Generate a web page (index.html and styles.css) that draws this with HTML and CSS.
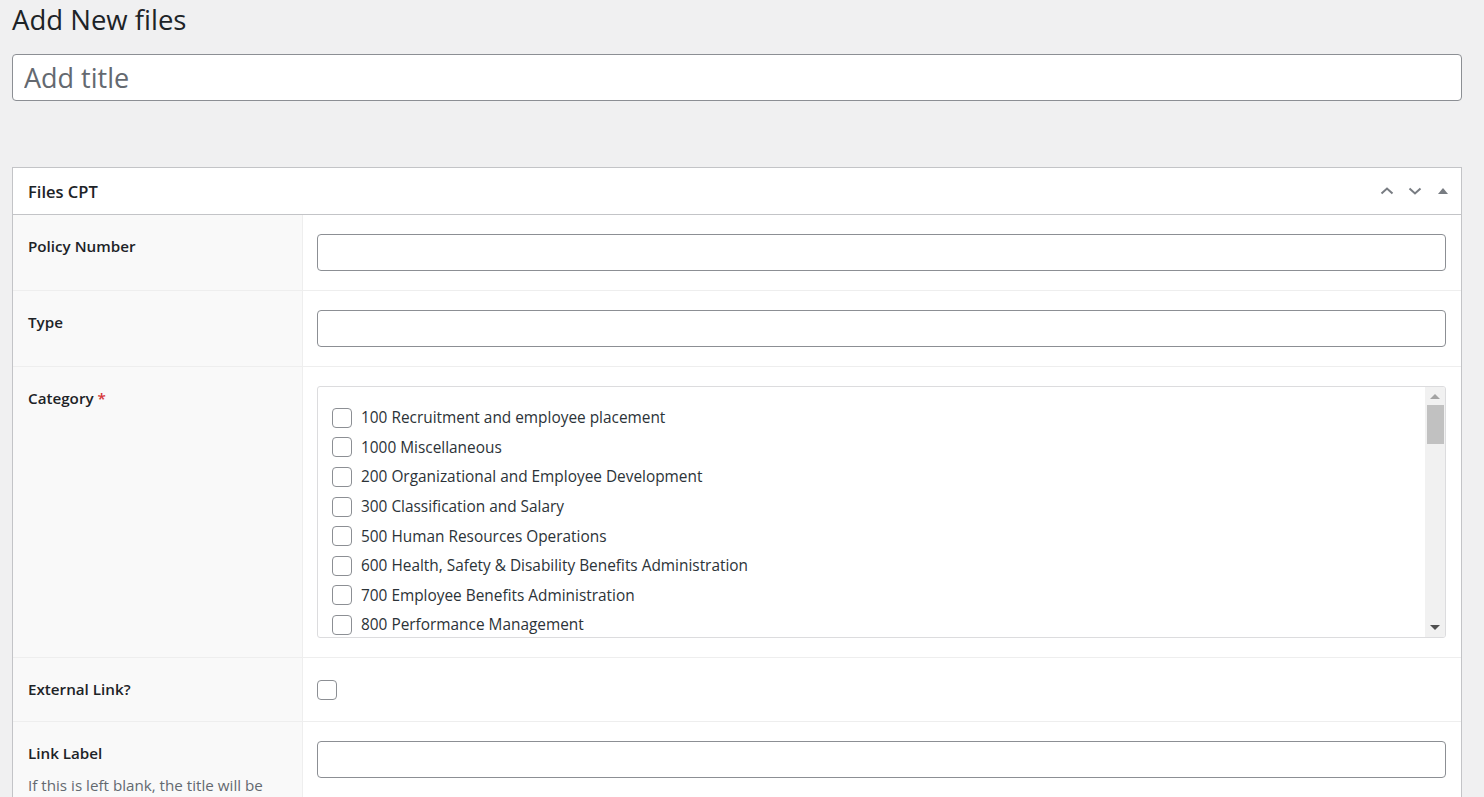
FILE: index.html
```html
<html>
<head>
	<meta charset="UTF-8">
	<title>Add New files</title>
	<link rel="stylesheet" href="styles.css">
</head>
<body>
	<div class="wrap">
		<h1 class="page-title">Add New files</h1>
		<div class="title-wrap">
			<input class="title-input" type="text" placeholder="Add title">
		</div>

		<div class="postbox">
			<div class="postbox-header">
				<h2>Files CPT</h2>
				<div class="handle-actions">
					<button class="handle-btn" type="button">
						<svg width="16" height="16" viewBox="0 0 16 16"><path d="M2.5 10.5 L8 5.5 L13.5 10.5" fill="none" stroke="#787c82" stroke-width="2"/></svg>
					</button>
					<button class="handle-btn" type="button">
						<svg width="16" height="16" viewBox="0 0 16 16"><path d="M2.5 5.5 L8 10.5 L13.5 5.5" fill="none" stroke="#787c82" stroke-width="2"/></svg>
					</button>
					<button class="handle-btn" type="button">
						<svg width="16" height="16" viewBox="0 0 16 16"><path d="M3 11 L8 5 L13 11 Z" fill="#787c82"/></svg>
					</button>
				</div>
			</div>

			<div class="fields">
				<div class="field">
					<div class="field-label"><label>Policy Number</label></div>
					<div class="field-input"><input class="text-input" type="text"></div>
				</div>
				<div class="field">
					<div class="field-label"><label>Type</label></div>
					<div class="field-input"><input class="text-input" type="text"></div>
				</div>
				<div class="field">
					<div class="field-label"><label>Category <span class="required">*</span></label></div>
					<div class="field-input">
						<div class="checklist-box">
							<ul class="checklist">
								<li><input type="checkbox" class="cb"><span>100 Recruitment and employee placement</span></li>
								<li><input type="checkbox" class="cb"><span>1000 Miscellaneous</span></li>
								<li><input type="checkbox" class="cb"><span>200 Organizational and Employee Development</span></li>
								<li><input type="checkbox" class="cb"><span>300 Classification and Salary</span></li>
								<li><input type="checkbox" class="cb"><span>500 Human Resources Operations</span></li>
								<li><input type="checkbox" class="cb"><span>600 Health, Safety &amp; Disability Benefits Administration</span></li>
								<li><input type="checkbox" class="cb"><span>700 Employee Benefits Administration</span></li>
								<li><input type="checkbox" class="cb"><span>800 Performance Management</span></li>
							</ul>
							<div class="scrollbar">
								<div class="sb-arrow sb-up"></div>
								<div class="sb-thumb"></div>
								<div class="sb-track"></div>
								<div class="sb-arrow sb-down"></div>
							</div>
						</div>
					</div>
				</div>
				<div class="field">
					<div class="field-label"><label>External Link?</label></div>
					<div class="field-input"><input type="checkbox" class="cb cb-single"></div>
				</div>
				<div class="field">
					<div class="field-label">
						<label>Link Label</label>
						<p class="description">If this is left blank, the title will be used.</p>
					</div>
					<div class="field-input"><input class="text-input" type="text"></div>
				</div>
			</div>
		</div>
	</div>
</body>
</html>
```

FILE: styles.css
```css
* {
	margin: 0;
	padding: 0;
	box-sizing: border-box;
}
body {
	background: #f0f0f1;
	color: #1d2327;
	font-family: "Open Sans", "Noto Sans", sans-serif;
	font-size: 15px;
}
.wrap {
	padding: 0 22px 0 12px;
}
.page-title {
	font-size: 27.5px;
	font-weight: 400;
	line-height: 35px;
	padding-top: 2px;
	color: #1d2327;
}
.title-wrap {
	margin-top: 17px;
}
.title-input {
	display: block;
	width: 100%;
	height: 47px;
	border: 1px solid #8c8f94;
	border-radius: 4px;
	padding: 0 11px;
	font-family: inherit;
	font-size: 27px;
	color: #1d2327;
	background: #fff;
	outline: none;
}
.title-input::placeholder {
	color: #646970;
}

/* meta box */
.postbox {
	margin-top: 66px;
	background: #fff;
	border: 1px solid #c3c4c7;
}
.postbox-header {
	display: flex;
	align-items: center;
	justify-content: space-between;
	height: 47px;
	border-bottom: 1px solid #c3c4c7;
	padding: 0 10px 0 15px;
}
.postbox-header h2 {
	font-size: 16.5px;
	font-weight: 600;
	color: #1d2327;
}
.handle-actions {
	display: flex;
	gap: 12px;
}
.handle-btn {
	display: flex;
	width: 16px;
	height: 16px;
	border: 0;
	background: none;
}

.field {
	display: flex;
	border-top: 1px solid #eeeeee;
}
.field:first-child {
	border-top: 0;
}
.field-label {
	width: 290px;
	flex-shrink: 0;
	background: #f9f9f9;
	border-right: 1px solid #eeeeee;
	padding: 21px 15px 15px 15px;
}
.field-label label {
	display: block;
	font-size: 15.2px;
	font-weight: 600;
	line-height: 20px;
	color: #1d2327;
}
.required {
	color: #d63638;
}
.description {
	margin-top: 12px;
	font-size: 15.2px;
	line-height: 20px;
	color: #646970;
}
.field-input {
	flex: 1;
	padding: 19px 15px 19px 14px;
}
.text-input {
	display: block;
	width: 100%;
	height: 37px;
	border: 1px solid #8c8f94;
	border-radius: 4px;
	background: #fff;
	font-family: inherit;
	font-size: 15px;
	padding: 0 8px;
	outline: none;
}

.cb {
	appearance: none;
	-webkit-appearance: none;
	display: block;
	flex-shrink: 0;
	width: 20px;
	height: 20px;
	border: 1px solid #8c8f94;
	border-radius: 4px;
	background: #fff;
	margin: 0;
}
.cb-single {
	margin: 3px 0 2px;
}

/* category list */
.checklist-box {
	display: flex;
	height: 252px;
	border: 1px solid #dcdcde;
	border-radius: 3px;
	overflow: hidden;
	background: #fff;
}
.checklist {
	flex: 1;
	list-style: none;
	padding: 16px 14px 0 14px;
	overflow: hidden;
}
.checklist li {
	display: flex;
	align-items: center;
	gap: 9px;
	height: 29.6px;
	font-size: 15.4px;
	color: #2c3338;
	white-space: nowrap;
}
.scrollbar {
	display: flex;
	flex-direction: column;
	align-items: center;
	width: 20px;
	background: #f1f1f1;
}
.sb-arrow {
	width: 0;
	height: 0;
	border-left: 5px solid transparent;
	border-right: 5px solid transparent;
}
.sb-up {
	margin: 7px 0 6px;
	border-bottom: 5px solid #a3a3a3;
}
.sb-thumb {
	width: 17px;
	height: 39px;
	background: #c1c1c1;
}
.sb-track {
	flex: 1;
}
.sb-down {
	margin: 6px 0 7px;
	border-top: 5px solid #505050;
}
```
